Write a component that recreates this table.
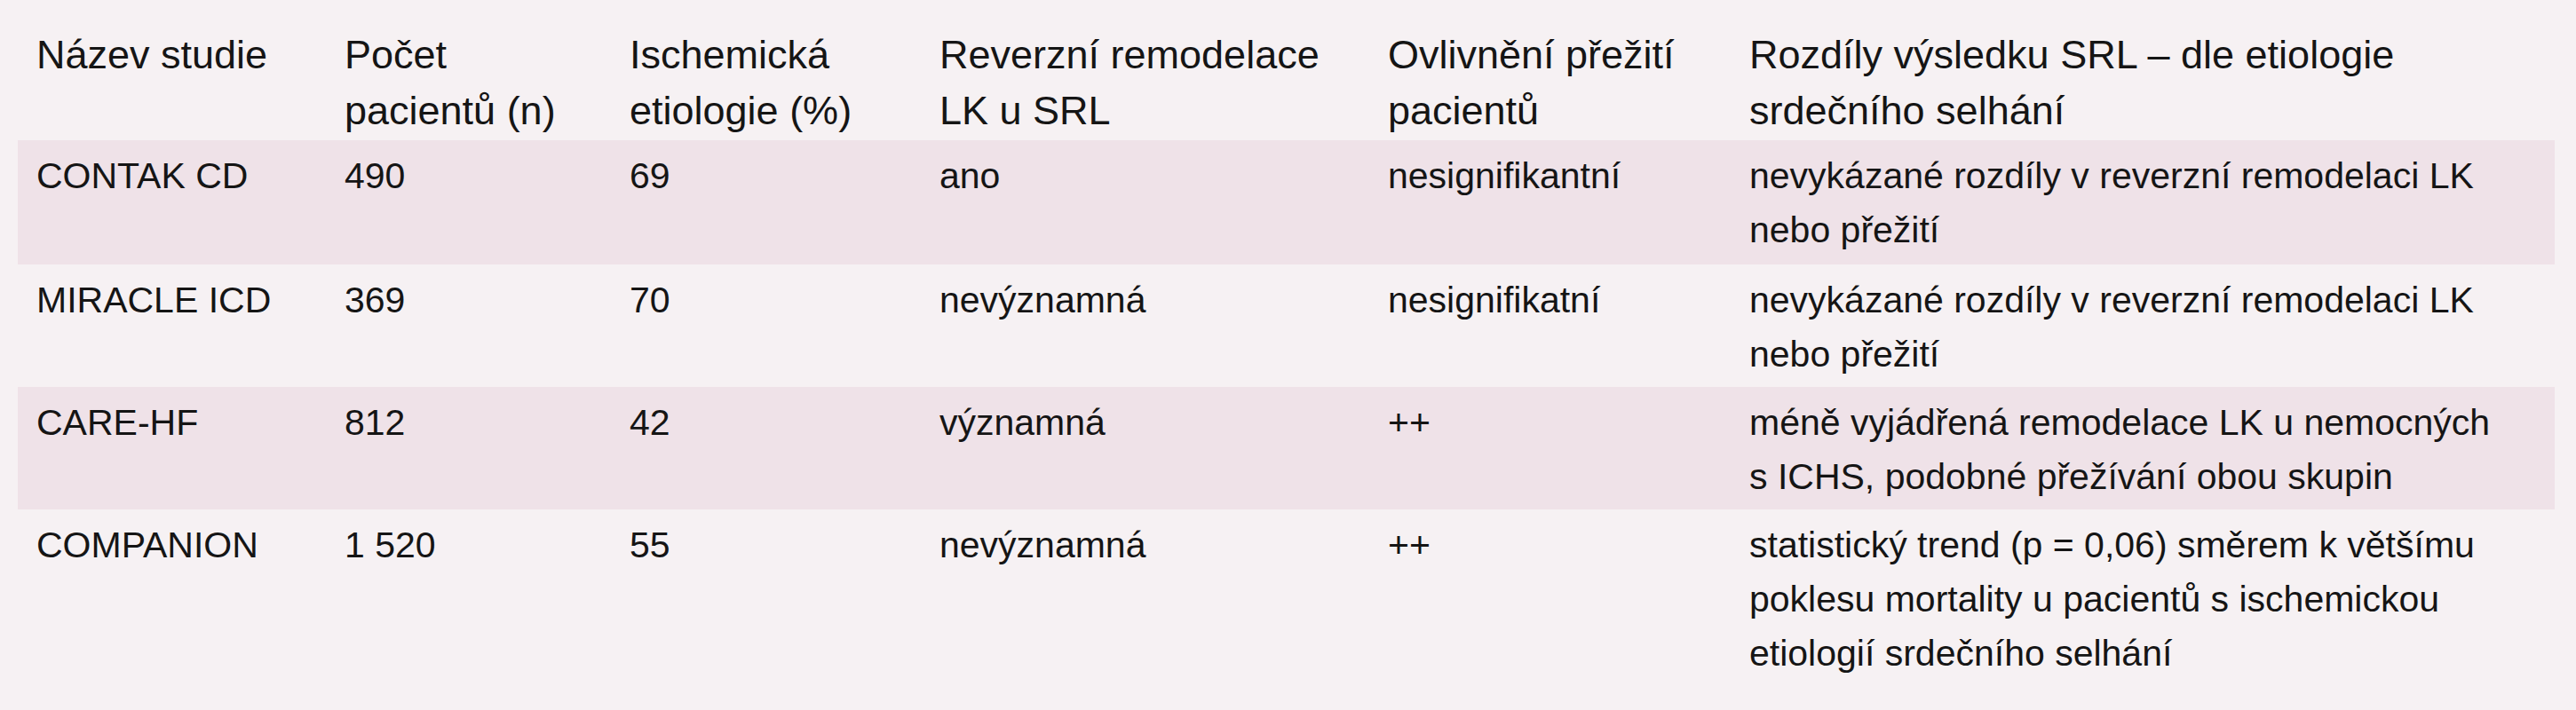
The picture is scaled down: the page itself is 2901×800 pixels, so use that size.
const cols = 'grid grid-cols-[347px_321px_349px_505px_407px_928px]';

type Row = {
  cells: string[][];
  shaded: boolean;
  height: string;
};

const header: string[][] = [
  ['Název studie'],
  ['Počet', 'pacientů (n)'],
  ['Ischemická', 'etiologie (%)'],
  ['Reverzní remodelace', 'LK u SRL'],
  ['Ovlivnění přežití', 'pacientů'],
  ['Rozdíly výsledku SRL – dle etiologie', 'srdečního selhání'],
];

const rows: Row[] = [
  {
    shaded: true,
    height: 'h-[140px]',
    cells: [
      ['CONTAK CD'],
      ['490'],
      ['69'],
      ['ano'],
      ['nesignifikantní'],
      ['nevykázané rozdíly v reverzní remodelaci LK', 'nebo přežití'],
    ],
  },
  {
    shaded: false,
    height: 'h-[138px]',
    cells: [
      ['MIRACLE ICD'],
      ['369'],
      ['70'],
      ['nevýznamná'],
      ['nesignifikatní'],
      ['nevykázané rozdíly v reverzní remodelaci LK', 'nebo přežití'],
    ],
  },
  {
    shaded: true,
    height: 'h-[138px]',
    cells: [
      ['CARE-HF'],
      ['812'],
      ['42'],
      ['významná'],
      ['++'],
      ['méně vyjádřená remodelace LK u nemocných', 's ICHS, podobné přežívání obou skupin'],
    ],
  },
  {
    shaded: false,
    height: 'h-[226px]',
    cells: [
      ['COMPANION'],
      ['1 520'],
      ['55'],
      ['nevýznamná'],
      ['++'],
      [
        'statistický trend (p = 0,06) směrem k většímu',
        'poklesu mortality u pacientů s ischemickou',
        'etiologií srdečního selhání',
      ],
    ],
  },
];

function Cell({ lines }: { lines: string[] }) {
  return (
    <div className="pl-[21px]">
      {lines.map((line, i) => (
        <div key={i} className="whitespace-nowrap">
          {line}
        </div>
      ))}
    </div>
  );
}

export default function App() {
  return (
    <div className="w-[2901px] h-[800px] overflow-hidden bg-[#f6f1f3] text-[#151515] font-['Liberation_Sans',Arial,sans-serif]">
      <div className="ml-[20px] w-[2857px]">
        {/* header */}
        <div className={`${cols} h-[158px] pt-[30px] text-[45px] leading-[63px]`}>
          {header.map((lines, i) => (
            <Cell key={i} lines={lines} />
          ))}
        </div>

        {rows.map((row, r) => (
          <div
            key={r}
            className={`${cols} ${row.height} pt-[10px] text-[41px] leading-[61px] ${
              row.shaded ? 'bg-[#efe2e8]' : ''
            }`}
          >
            {row.cells.map((lines, i) => (
              <Cell key={i} lines={lines} />
            ))}
          </div>
        ))}
      </div>
    </div>
  );
}
